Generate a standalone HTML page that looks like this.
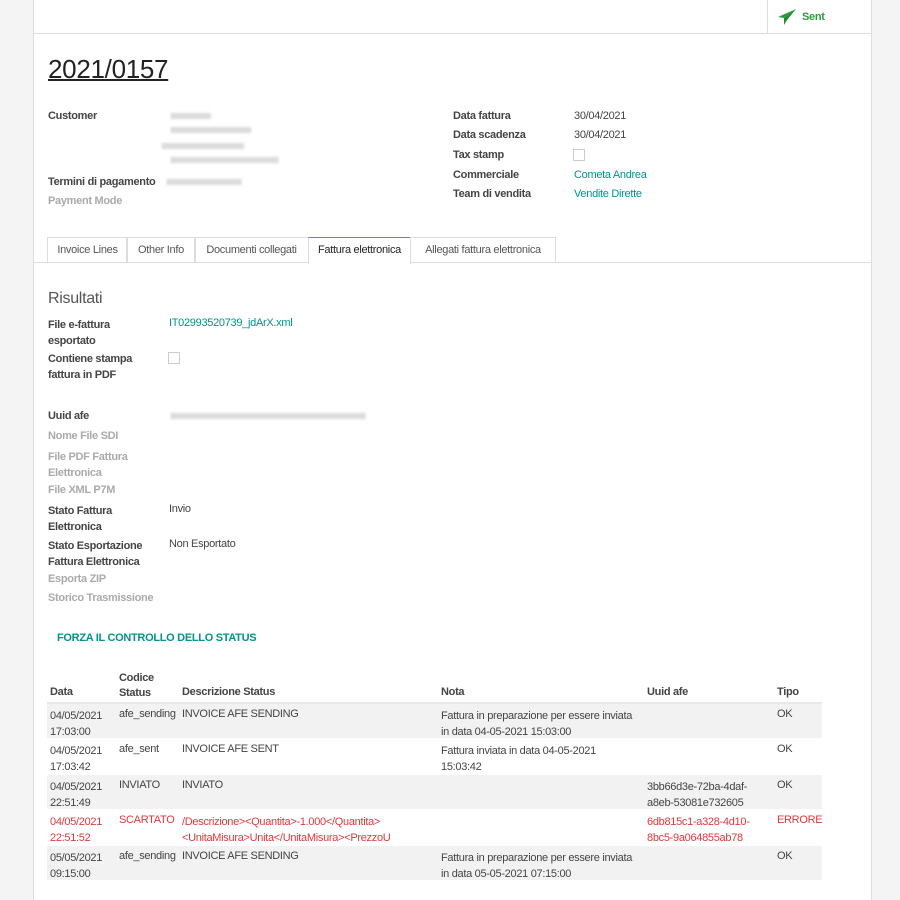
<!DOCTYPE html>
<html><head><style>
body{margin:0;width:900px;height:900px;background:#f4f4f4;font-family:"Liberation Sans",sans-serif;font-size:11px;color:#444;overflow:hidden;position:relative;letter-spacing:-0.3px}
.sheet{position:absolute;left:33px;top:0;width:837px;height:900px;background:#fff;border-left:1px solid #ddd;border-right:1px solid #ddd}
.a{position:absolute;white-space:nowrap}
.b{font-weight:bold;color:#444}
.g{color:#aaa;font-weight:bold}
.t{color:#00958a}
.r{color:#e0383e}
.blur{position:absolute;height:6px;background:repeating-linear-gradient(90deg,#bbb 0 2px,#eee 2px 3px);filter:blur(1.2px);opacity:.7}
.tab{position:absolute;top:237px;height:25px;border:1px solid #ddd;border-bottom:none;line-height:25px;text-align:center;color:#555}
.row{position:absolute;left:13px;width:775px;height:34px}
</style></head><body>
<div class="sheet">
<div class="a" style="left:0;top:33px;width:837px;border-top:1px solid #ddd"></div>
<div class="a" style="left:733px;top:0;height:33px;border-left:1px solid #ddd"></div>
<svg class="a" style="left:743px;top:8px" width="20" height="18" viewBox="0 0 20 18"><path d="M19 1 L1 9 L7 10 Z" fill="#2a9d3a"/><path d="M19 1 L7 10 L7 17 L10 12 Z" fill="#1f8a2f"/></svg>
<div class="a" style="left:768px;top:11px;color:#2a9d3a;font-weight:bold">Sent</div>
<div class="a" style="left:14px;top:54px;font-size:26px;color:#222;text-decoration:underline;text-decoration-thickness:2px">2021/0157</div>
<div class="a b" style="left:14px;top:110px">Customer</div>
<div class="blur" style="left:137px;top:113px;width:40px"></div>
<div class="blur" style="left:137px;top:127px;width:80px"></div>
<div class="blur" style="left:128px;top:143px;width:82px"></div>
<div class="blur" style="left:137px;top:157px;width:108px"></div>
<div class="a b" style="left:14px;top:176px">Termini di pagamento</div>
<div class="blur" style="left:133px;top:179px;width:75px"></div>
<div class="a g" style="left:14px;top:195px">Payment Mode</div>
<div class="a b" style="left:419px;top:110px">Data fattura</div><div class="a" style="left:540px;top:110px">30/04/2021</div>
<div class="a b" style="left:419px;top:129px">Data scadenza</div><div class="a" style="left:540px;top:129px">30/04/2021</div>
<div class="a b" style="left:419px;top:149px">Tax stamp</div><div class="a" style="left:539px;top:149px;width:10px;height:10px;border:1px solid #ccc"></div>
<div class="a b" style="left:419px;top:169px">Commerciale</div><div class="a t" style="left:540px;top:169px">Cometa Andrea</div>
<div class="a b" style="left:419px;top:188px">Team di vendita</div><div class="a t" style="left:540px;top:188px">Vendite Dirette</div>
<div class="a" style="left:0;top:262px;width:837px;border-top:1px solid #ddd"></div>
<div class="tab" style="left:13px;width:79px">Invoice Lines</div>
<div class="tab" style="left:92px;width:68px">Other Info</div>
<div class="tab" style="left:160px;width:113px">Documenti collegati</div>
<div class="tab" style="left:274px;width:101px;height:26px;background:#fff;color:#222;border-top:1px solid #7c7bad">Fattura elettronica</div>
<div class="tab" style="left:376px;width:144px">Allegati fattura elettronica</div>
<div class="a" style="left:14px;top:290px;font-size:16px;color:#555">Risultati</div>
<div class="a b" style="left:14px;top:317px;line-height:16px">File e-fattura<br>esportato</div>
<div class="a t" style="left:135px;top:317px">IT02993520739_jdArX.xml</div>
<div class="a b" style="left:14px;top:351px;line-height:16px">Contiene stampa<br>fattura in PDF</div>
<div class="a" style="left:134px;top:352px;width:10px;height:10px;border:1px solid #ccc"></div>
<div class="a b" style="left:14px;top:410px">Uuid afe</div>
<div class="blur" style="left:137px;top:413px;width:195px"></div>
<div class="a g" style="left:14px;top:430px">Nome File SDI</div>
<div class="a g" style="left:14px;top:449px;line-height:16px">File PDF Fattura<br>Elettronica</div>
<div class="a g" style="left:14px;top:484px">File XML P7M</div>
<div class="a b" style="left:14px;top:503px;line-height:16px">Stato Fattura<br>Elettronica</div>
<div class="a" style="left:135px;top:503px">Invio</div>
<div class="a b" style="left:14px;top:538px;line-height:16px">Stato Esportazione<br>Fattura Elettronica</div>
<div class="a" style="left:135px;top:538px">Non Esportato</div>
<div class="a g" style="left:14px;top:573px">Esporta ZIP</div>
<div class="a g" style="left:14px;top:592px">Storico Trasmissione</div>
<div class="a t" style="left:23px;top:632px;font-weight:bold">FORZA IL CONTROLLO DELLO STATUS</div>
<div class="a b" style="left:85px;top:671px;line-height:15px">Codice<br>Status</div>
<div class="a b" style="left:16px;top:686px">Data</div>
<div class="a b" style="left:148px;top:686px">Descrizione Status</div>
<div class="a b" style="left:407px;top:686px">Nota</div>
<div class="a b" style="left:613px;top:686px">Uuid afe</div>
<div class="a b" style="left:743px;top:686px">Tipo</div>
<div class="a" style="left:13px;top:702px;width:775px;border-top:2px solid #e8e8e8"></div>
<div class="row" style="top:704px;background:#f2f2f2"></div>
<div class="row" style="top:775px;background:#f2f2f2"></div>
<div class="row" style="top:846px;background:#f2f2f2"></div>
<div class="a" style="left:16px;top:708px;line-height:16px">04/05/2021<br>17:03:00</div><div class="a" style="left:85px;top:708px">afe_sending</div><div class="a" style="left:148px;top:708px">INVOICE AFE SENDING</div><div class="a" style="left:407px;top:708px;line-height:16px">Fattura in preparazione per essere inviata<br>in data 04-05-2021 15:03:00</div><div class="a" style="left:743px;top:708px">OK</div>
<div class="a" style="left:16px;top:743px;line-height:16px">04/05/2021<br>17:03:42</div><div class="a" style="left:85px;top:743px">afe_sent</div><div class="a" style="left:148px;top:743px">INVOICE AFE SENT</div><div class="a" style="left:407px;top:743px;line-height:16px">Fattura inviata in data 04-05-2021<br>15:03:42</div><div class="a" style="left:743px;top:743px">OK</div>
<div class="a" style="left:16px;top:779px;line-height:16px">04/05/2021<br>22:51:49</div><div class="a" style="left:85px;top:779px">INVIATO</div><div class="a" style="left:148px;top:779px">INVIATO</div><div class="a" style="left:613px;top:779px;line-height:16px">3bb66d3e-72ba-4daf-<br>a8eb-53081e732605</div><div class="a" style="left:743px;top:779px">OK</div>
<div class="a r" style="left:16px;top:814px;line-height:16px">04/05/2021<br>22:51:52</div><div class="a r" style="left:85px;top:814px">SCARTATO</div><div class="a r" style="left:148px;top:814px;line-height:16px">/Descrizione&gt;&lt;Quantita&gt;-1.000&lt;/Quantita&gt;<br>&lt;UnitaMisura&gt;Unita&lt;/UnitaMisura&gt;&lt;PrezzoU</div><div class="a r" style="left:613px;top:814px;line-height:16px">6db815c1-a328-4d10-<br>8bc5-9a064855ab78</div><div class="a r" style="left:743px;top:814px">ERRORE</div>
<div class="a" style="left:16px;top:850px;line-height:16px">05/05/2021<br>09:15:00</div><div class="a" style="left:85px;top:850px">afe_sending</div><div class="a" style="left:148px;top:850px">INVOICE AFE SENDING</div><div class="a" style="left:407px;top:850px;line-height:16px">Fattura in preparazione per essere inviata<br>in data 05-05-2021 07:15:00</div><div class="a" style="left:743px;top:850px">OK</div>
</div>
</body></html>
